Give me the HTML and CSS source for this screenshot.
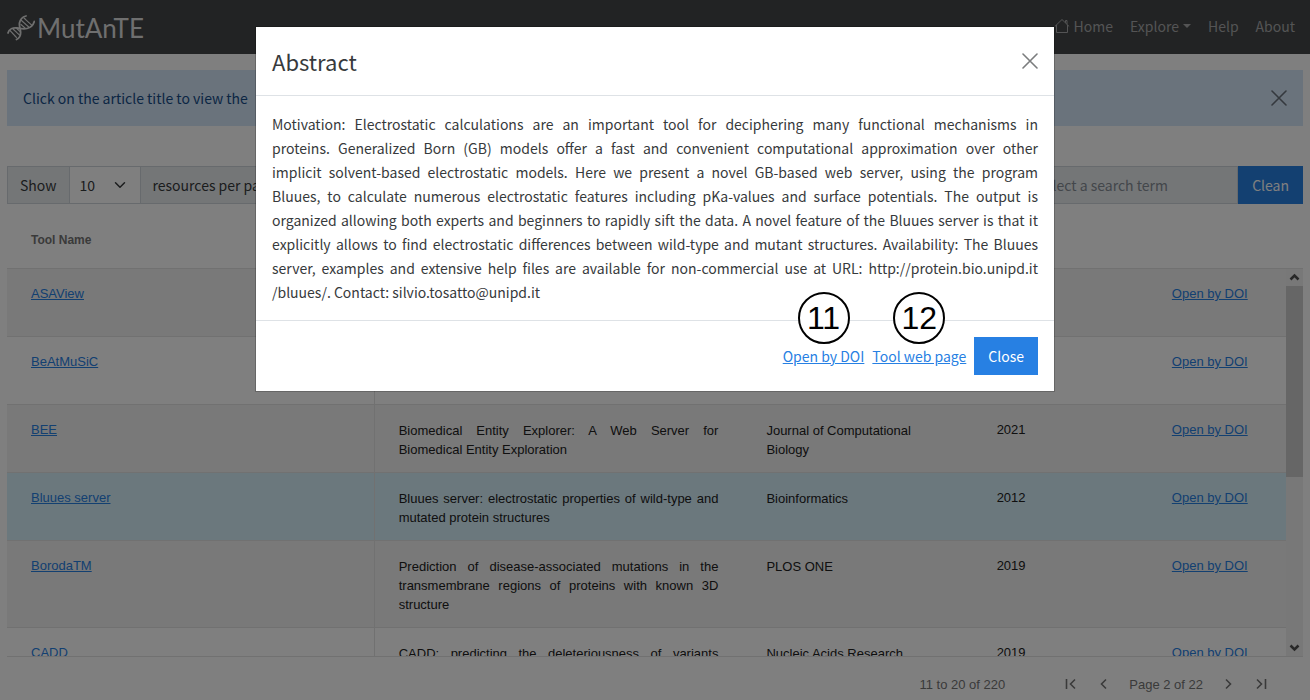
FILE: index.html
```html
<!DOCTYPE html>
<html lang="en">
<head>
<meta charset="utf-8">
<title>MutAnTE</title>
<link rel="stylesheet" href="styles.css">
</head>
<body>
<div class="page">
  <header class="navbar">
    <a class="brand" href="#">
      <svg class="brand-icon" viewBox="0 0 28 26" fill="none" stroke="currentColor" stroke-width="1.800" stroke-linecap="round">
        <path d="M1 18C2 14 6 12.500 10 13S16 14.500 20 13.500S26 11 27.300 6.500M9.500 24.500C13 23 14 20 13.500 16S12 11 12.500 8S15 2 19 1"/>
        <path d="M3 15.500l6.500 7M6 14l6.500 6M10 13.800l3 2.700M14 9.500l4.500 4M14.500 5.500l7.500 6.800M17 3l8 7.500" stroke-width="1.200" stroke-dasharray="2.600 .8"/>
      </svg>
      <span>MutAnTE</span>
    </a>
    <nav class="nav-links">
      <a href="#"><svg class="home-icon" viewBox="0 0 16 16" fill="none" stroke="currentColor"><path d="M.8 8.500 8 1.500l7.200 7M2.500 7V14.500h11V7M11.500 4.800V2.500h1.500v3.800"/></svg> Home</a>
      <a href="#">Explore<span class="caret"></span></a>
      <a href="#">Help</a>
      <a href="#">About</a>
    </nav>
  </header>
  <main class="content">
    <div class="alert">
      <span>Click on the article title to view the</span>
      <button class="icon-button" type="button" aria-label="Dismiss"><svg viewBox="0 0 16 16" stroke="currentColor" stroke-width="1.600" stroke-linecap="round"><path d="M1 1l14 14M15 1L1 15"/></svg></button>
    </div>
    <div class="toolbar">
      <div class="group">
        <label class="addon" for="size">Show</label>
        <div class="select-wrap">
          <select id="size"><option>10</option></select>
          <svg viewBox="0 0 16 16" fill="none" stroke="#373a3c" stroke-width="2" stroke-linecap="round" stroke-linejoin="round"><path d="M2 5l6 6 6-6"/></svg>
        </div>
        <span class="addon">resources per page</span>
      </div>
      <div class="group search">
        <input type="text" placeholder="Select a search term" aria-label="Search term" disabled>
        <button class="button" type="button">Clean</button>
      </div>
    </div>
    <section class="grid">
      <div class="grid-head">Tool Name</div>
      <div class="grid-body">
        <div class="grid-view">
          <table>
            <colgroup><col class="c-name"><col class="c-title"><col class="c-journal"><col class="c-year"><col class="c-doi"></colgroup>
            <tbody>
            <tr><td><a href="#">ASAView</a></td><td></td><td></td><td></td><td><a href="#">Open by DOI</a></td></tr>
            <tr><td><a href="#">BeAtMuSiC</a></td><td></td><td></td><td></td><td><a href="#">Open by DOI</a></td></tr>
            <tr><td><a href="#">BEE</a></td><td class="text title">Biomedical Entity Explorer: A Web Server for Biomedical Entity Exploration</td><td class="text">Journal of Computational Biology</td><td>2021</td><td><a href="#">Open by DOI</a></td></tr>
            <tr class="selected"><td><a href="#">Bluues server</a></td><td class="text title">Bluues server: electrostatic properties of wild-type and mutated protein structures</td><td class="text">Bioinformatics</td><td>2012</td><td><a href="#">Open by DOI</a></td></tr>
            <tr><td><a href="#">BorodaTM</a></td><td class="text title">Prediction of disease-associated mutations in the transmembrane regions of proteins with known 3D structure</td><td class="text">PLOS ONE</td><td>2019</td><td><a href="#">Open by DOI</a></td></tr>
            <tr><td><a href="#">CADD</a></td><td class="text title">CADD: predicting the deleteriousness of variants throughout the human genome</td><td class="text">Nucleic Acids Research</td><td>2019</td><td><a href="#">Open by DOI</a></td></tr>
            </tbody>
          </table>
        </div>
        <div class="scrollbar">
          <svg viewBox="0 0 17 17" fill="none" stroke="#505050" stroke-width="2.500"><path d="M4.500 10.500l4-4 4 4"/></svg>
          <div class="track"><div class="thumb"></div></div>
          <svg viewBox="0 0 17 17" fill="none" stroke="#505050" stroke-width="2.500"><path d="M4.500 6.500l4 4 4-4"/></svg>
        </div>
      </div>
      <div class="pager">
        <span class="range">11 to 20 of 220</span>
        <button type="button" aria-label="First page"><svg viewBox="0 0 16 16"><path d="M3.500 3v10M12 3.500L7.500 8l4.500 4.500"/></svg></button>
        <button type="button" aria-label="Previous page"><svg viewBox="0 0 16 16"><path d="M10 3.500L5.500 8l4.500 4.500"/></svg></button>
        <span>Page 2 of 22</span>
        <button type="button" aria-label="Next page"><svg viewBox="0 0 16 16"><path d="M6 3.500L10.500 8 6 12.500"/></svg></button>
        <button type="button" aria-label="Last page"><svg viewBox="0 0 16 16"><path d="M4 3.500L8.500 8 4 12.500M12.500 3v10"/></svg></button>
      </div>
    </section>
  </main>
</div>
<div class="backdrop">
  <div class="modal" role="dialog" aria-labelledby="modal-title">
    <div class="modal-head">
      <h1 id="modal-title">Abstract</h1>
      <button class="icon-button" type="button" aria-label="Close dialog"><svg viewBox="0 0 16 16" stroke="currentColor" stroke-width="1.600" stroke-linecap="round"><path d="M1 1l14 14M15 1L1 15"/></svg></button>
    </div>
    <p class="modal-text">
      <span>Motivation: Electrostatic calculations are an important tool for deciphering many functional mechanisms in</span>
      <span>proteins. Generalized Born (GB) models offer a fast and convenient computational approximation over other</span>
      <span>implicit solvent-based electrostatic models. Here we present a novel GB-based web server, using the program</span>
      <span>Bluues, to calculate numerous electrostatic features including pKa-values and surface potentials. The output is</span>
      <span>organized allowing both experts and beginners to rapidly sift the data. A novel feature of the Bluues server is that it</span>
      <span>explicitly allows to find electrostatic differences between wild-type and mutant structures. Availability: The Bluues</span>
      <span>server, examples and extensive help files are available for non-commercial use at URL: http://protein.bio.unipd.it</span>
      <span>/bluues/. Contact: silvio.tosatto@unipd.it</span>
    </p>
    <div class="modal-foot">
      <div class="marked"><a href="#">Open by DOI</a><span class="marker">11</span></div>
      <div class="marked"><a href="#">Tool web page</a><span class="marker">12</span></div>
      <button class="button" type="button">Close</button>
    </div>
  </div>
</div>
</body>
</html>
```
FILE: styles.css
```css
* { box-sizing: border-box; }
body {
  margin: 0;
  background: #fff;
  color: #373a3c;
  font: 14px/24px "Noto Sans CJK SC", "Noto Sans", sans-serif;
}
a { color: #2780e3; }
button, input, select { font: inherit; border-radius: 0; margin: 0; }
.page { height: 100vh; display: flex; flex-direction: column; overflow: hidden; }
.navbar {
  flex: none;
  height: 54px;
  padding: 0 15px 0 7px;
  background: #444648;
  display: flex;
  align-items: center;
  justify-content: space-between;
}
.brand {
  display: flex;
  align-items: center;
  gap: 2px;
  padding-top: 2px;
  color: #dedede;
  text-decoration: none;
  font: 26px/32px Lato, sans-serif;
}
.brand-icon { width: 28px; height: 26px; }
.nav-links { display: flex; gap: 17px; padding-bottom: 2px; }
.nav-links a { color: #a8a9aa; text-decoration: none; }
.home-icon { width: 16px; height: 16px; vertical-align: -2px; }
.caret {
  display: inline-block;
  margin-left: 4px;
  vertical-align: 4px;
  border: 4px solid transparent;
  border-top-color: currentColor;
  border-bottom: 0;
}
.content { flex: 1; min-height: 0; padding: 16px 7px 0; display: flex; flex-direction: column; }
.alert {
  padding: 16px;
  background: #d4e6f9;
  color: #174d88;
  display: flex;
  align-items: center;
  justify-content: space-between;
}
.icon-button { border: 0; padding: 0; background: none; color: #7b7d7e; display: flex; }
.icon-button svg { width: 16px; height: 16px; }
.alert .icon-button { color: #6a737c; }
.toolbar { margin: 40px 0 8px; display: flex; justify-content: space-between; }
.group { display: flex; height: 38px; }
.addon { padding: 6px 12px; border: 1px solid #ced4da; background: #e9ecef; }
.select-wrap { position: relative; display: flex; width: 70px; border: solid #ced4da; border-width: 1px 0; }
.select-wrap select { width: 100%; border: 0; background: #fff; color: #373a3c; padding: 0 10px; appearance: none; }
.select-wrap svg { position: absolute; right: 14px; top: 12px; width: 12px; height: 12px; pointer-events: none; }
.search { width: 37%; }
.search input { flex: 1; min-width: 0; padding: 6px 12px 6px 212px; border: 1px solid #ced4da; background: #e9ecef; }
.search input::placeholder { color: #868e96; opacity: 1; }
.button { height: 38px; padding: 0 14px; border: 0; background: #2780e3; color: #fff; }
.grid { flex: 1; min-height: 0; display: flex; flex-direction: column; font: 13px/17px "Liberation Sans", Arial, sans-serif; }
.grid-head { padding: 20px 24px 19px; font-weight: bold; font-size: 12px; color: #757575; }
.grid-body { flex: 1; min-height: 0; display: flex; border: solid #e2e2e2; border-width: 1px 0; }
.grid-view { flex: 1; overflow: hidden; }
table { width: 100%; table-layout: fixed; border-collapse: separate; border-spacing: 0; }
.c-name, .c-title { width: 28.75%; }
.c-journal { width: 18%; }
.c-year { width: 13.7%; }
td { height: 68px; padding: 16px 24px 13px; vertical-align: top; border-bottom: 1px solid #e2e2e2; color: #212121; }
td:first-child { border-right: 1px solid #e2e2e2; }
td.text { line-height: 19px; }
td.title { text-align: justify; }
tr:nth-child(odd) td { background: #f2f2f2; }
tr.selected td { background: #d7f0fb; }
.scrollbar { width: 17px; display: flex; flex-direction: column; background: #f1f1f1; }
.track { flex: 1; }
.thumb { height: 54%; background: #cdcdcd; }
.scrollbar svg { display: block; width: 17px; height: 17px; }
.pager {
  height: 43px;
  padding: 19px 34px 0 0;
  display: flex;
  justify-content: flex-end;
  align-items: flex-start;
  gap: 17px;
  color: #757575;
}
.range { margin-right: 41px; }
.pager button { border: 0; padding: 0; background: none; color: #757575; }
.pager svg { display: block; width: 16px; height: 16px; fill: none; stroke: currentColor; stroke-width: 1.6; }
.backdrop { position: fixed; inset: 0; background: rgba(0, 0, 0, .5); padding: 26px 16px; overflow: hidden; }
.modal {
  max-width: 800px;
  margin: 0 auto;
  border: 1px solid rgba(0, 0, 0, .2);
  background: #fff;
  background-clip: padding-box;
}
.modal-head {
  padding: 16px;
  border-bottom: 1px solid #dee2e6;
  display: flex;
  justify-content: space-between;
  align-items: center;
}
.modal-head h1 { margin: 0; font-size: 22px; line-height: 36px; font-weight: 400; }
.modal-text { margin: 0; padding: 16px; }
.modal-text span { display: block; text-align: justify; text-align-last: justify; }
.modal-text span:last-child { text-align-last: left; }
.modal-foot {
  padding: 16px;
  border-top: 1px solid #dee2e6;
  display: flex;
  justify-content: flex-end;
  align-items: center;
  gap: 8px;
}
.marked { position: relative; }
.marker {
  position: absolute;
  left: 50%;
  bottom: 24px;
  width: 52px;
  height: 52px;
  margin-left: -26px;
  border: 2px solid #000;
  border-radius: 50%;
  background: #fff;
  color: #000;
  text-align: center;
  font: 32px/48px "Liberation Sans", Arial, sans-serif;
}
```
